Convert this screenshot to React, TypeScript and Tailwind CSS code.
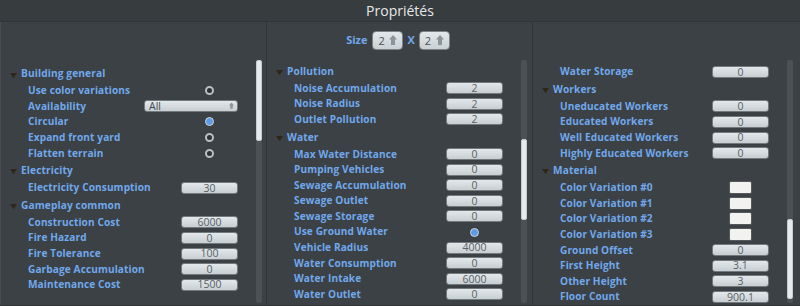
import React from "react";

type Row =
  | { kind: "header"; label: string }
  | { kind: "input"; label: string; value: string }
  | { kind: "radio"; label: string; checked: boolean }
  | { kind: "select"; label: string; value: string }
  | { kind: "swatch"; label: string };

const col1: Row[] = [
  { kind: "header", label: "Building general" },
  { kind: "radio", label: "Use color variations", checked: false },
  { kind: "select", label: "Availability", value: "All" },
  { kind: "radio", label: "Circular", checked: true },
  { kind: "radio", label: "Expand front yard", checked: false },
  { kind: "radio", label: "Flatten terrain", checked: false },
  { kind: "header", label: "Electricity" },
  { kind: "input", label: "Electricity Consumption", value: "30" },
  { kind: "header", label: "Gameplay common" },
  { kind: "input", label: "Construction Cost", value: "6000" },
  { kind: "input", label: "Fire Hazard", value: "0" },
  { kind: "input", label: "Fire Tolerance", value: "100" },
  { kind: "input", label: "Garbage Accumulation", value: "0" },
  { kind: "input", label: "Maintenance Cost", value: "1500" },
];

const col2: Row[] = [
  { kind: "header", label: "Pollution" },
  { kind: "input", label: "Noise Accumulation", value: "2" },
  { kind: "input", label: "Noise Radius", value: "2" },
  { kind: "input", label: "Outlet Pollution", value: "2" },
  { kind: "header", label: "Water" },
  { kind: "input", label: "Max Water Distance", value: "0" },
  { kind: "input", label: "Pumping Vehicles", value: "0" },
  { kind: "input", label: "Sewage Accumulation", value: "0" },
  { kind: "input", label: "Sewage Outlet", value: "0" },
  { kind: "input", label: "Sewage Storage", value: "0" },
  { kind: "radio", label: "Use Ground Water", checked: true },
  { kind: "input", label: "Vehicle Radius", value: "4000" },
  { kind: "input", label: "Water Consumption", value: "0" },
  { kind: "input", label: "Water Intake", value: "6000" },
  { kind: "input", label: "Water Outlet", value: "0" },
];

const col3: Row[] = [
  { kind: "input", label: "Water Storage", value: "0" },
  { kind: "header", label: "Workers" },
  { kind: "input", label: "Uneducated Workers", value: "0" },
  { kind: "input", label: "Educated Workers", value: "0" },
  { kind: "input", label: "Well Educated Workers", value: "0" },
  { kind: "input", label: "Highly Educated Workers", value: "0" },
  { kind: "header", label: "Material" },
  { kind: "swatch", label: "Color Variation #0" },
  { kind: "swatch", label: "Color Variation #1" },
  { kind: "swatch", label: "Color Variation #2" },
  { kind: "swatch", label: "Color Variation #3" },
  { kind: "input", label: "Ground Offset", value: "0" },
  { kind: "input", label: "First Height", value: "3.1" },
  { kind: "input", label: "Other Height", value: "3" },
  { kind: "input", label: "Floor Count", value: "900.1" },
];

const UpArrow = ({ className }: { className?: string }) => (
  <svg viewBox="0 0 8 11" className={className}>
    <polygon points="4,0 8,4.5 6,4.5 6,10 2,10 2,4.5 0,4.5" fill="#8d9497" />
  </svg>
);

function Value({ row }: { row: Row }) {
  if (row.kind === "input") {
    return (
      <div className="w-[57px] h-[12px] rounded-[3px] border border-[#727a7e] bg-gradient-to-b from-[#e3e8ea] to-[#c7cfd3] flex items-center justify-center text-[10.5px] leading-none text-[#5a6164]">
        {row.value}
      </div>
    );
  }
  if (row.kind === "radio") {
    return (
      <div className="w-[57px] flex justify-center">
        {row.checked ? (
          <div className="w-[9px] h-[9px] rounded-full border-[1.5px] border-[#cfd5d8] bg-[#5c9ce6]" />
        ) : (
          <div className="w-[9px] h-[9px] rounded-full border-2 border-[#b9bfc2] bg-[#2c3134]" />
        )}
      </div>
    );
  }
  if (row.kind === "swatch") {
    return (
      <div className="w-[57px] flex justify-center">
        <div className="w-[23px] h-[13px] rounded-[2px] border border-[#56595a] bg-[#f2f2f0]" />
      </div>
    );
  }
  if (row.kind === "select") {
    return (
      <div className="w-[94px] h-[12px] rounded-[3px] border border-[#727a7e] bg-gradient-to-b from-[#e3e8ea] to-[#c7cfd3] flex items-center justify-between pl-[4px] pr-[3px] text-[10.5px] leading-none text-[#40474a]">
        <span>{row.value}</span>
        <UpArrow className="w-[5px] h-[8px]" />
      </div>
    );
  }
  return null;
}

function List({ rows }: { rows: Row[] }) {
  return (
    <div className="flex flex-col">
      {rows.map((r, i) =>
        r.kind === "header" ? (
          <div key={i} className="h-[19px] pt-[1px] flex items-center">
            <div className="w-[20px] flex justify-end pr-[4px]">
              <svg viewBox="0 0 7 5" className="w-[7px] h-[5px] mt-[2px]">
                <polygon points="0,0 7,0 3.5,5" fill="#2e2717" />
              </svg>
            </div>
            <span className="text-[10.2px] font-bold text-[#71a8ec] tracking-[0.1px]">{r.label}</span>
          </div>
        ) : (
          <div key={i} className="h-[15.6px] flex items-center justify-between pr-[18px]">
            <span className="pl-[27px] text-[10.1px] font-bold text-[#71a8ec] whitespace-nowrap tracking-[0.1px]">{r.label}</span>
            <Value row={r} />
          </div>
        )
      )}
    </div>
  );
}

function Scrollbar({ thumbTop, thumbHeight }: { thumbTop: number; thumbHeight: number }) {
  return (
    <div className="w-[6px] mt-[38px] mb-[2px] bg-[#4b5256] rounded-[2px] flex flex-col">
      <div style={{ height: thumbTop }} />
      <div className="bg-[#e6eaec] rounded-[2px] border border-[#c4cacd]" style={{ height: thumbHeight }} />
    </div>
  );
}

function SizeBox() {
  return (
    <div className="w-[31px] h-[19px] rounded-[4px] border border-[#7c8488] bg-gradient-to-b from-[#e3e8ea] to-[#c9d1d5] flex items-center justify-between pl-[5px] pr-[5px]">
      <span className="text-[11px] leading-none text-[#4a5154]">2</span>
      <UpArrow className="w-[8px] h-[11px]" />
    </div>
  );
}

export default function App() {
  return (
    <div
      className="w-[800px] h-[306px] bg-[#3b4144] flex flex-col overflow-hidden"
      style={{ fontFamily: '"Open Sans", "Liberation Sans", sans-serif' }}
    >
      <div className="h-[25px] bg-[#373c3f] border-b border-[#303537] flex items-center justify-center text-[14px] text-[#e6e8e8]">
        Propriétés
      </div>
      <div className="flex-1 flex border-b border-[#2f3336] mb-[3px]">
        <div className="w-[266px] flex border-l border-[#464c50]">
          <div className="w-[255px] pt-[42px]">
            <List rows={col1} />
          </div>
          <Scrollbar thumbTop={0} thumbHeight={81} />
        </div>
        <div className="w-[266px] flex border-l border-[#303538]">
          <div className="w-[254px] flex flex-col">
            <div className="mt-[9px] h-[19px] flex items-center justify-center gap-[3px] pl-[8px]">
              <span className="text-[11px] font-bold text-[#71a8ec] mr-[2px]">Size</span>
              <SizeBox />
              <span className="text-[11px] font-bold text-[#71a8ec] mx-[1px]">X</span>
              <SizeBox />
            </div>
            <div className="mt-[11.5px]">
              <List rows={col2} />
            </div>
          </div>
          <Scrollbar thumbTop={79} thumbHeight={81} />
        </div>
        <div className="flex-1 flex border-l border-[#303538]">
          <div className="w-[254px] pt-[42px]">
            <List rows={col3} />
          </div>
          <Scrollbar thumbTop={159} thumbHeight={80} />
        </div>
      </div>
    </div>
  );
}
